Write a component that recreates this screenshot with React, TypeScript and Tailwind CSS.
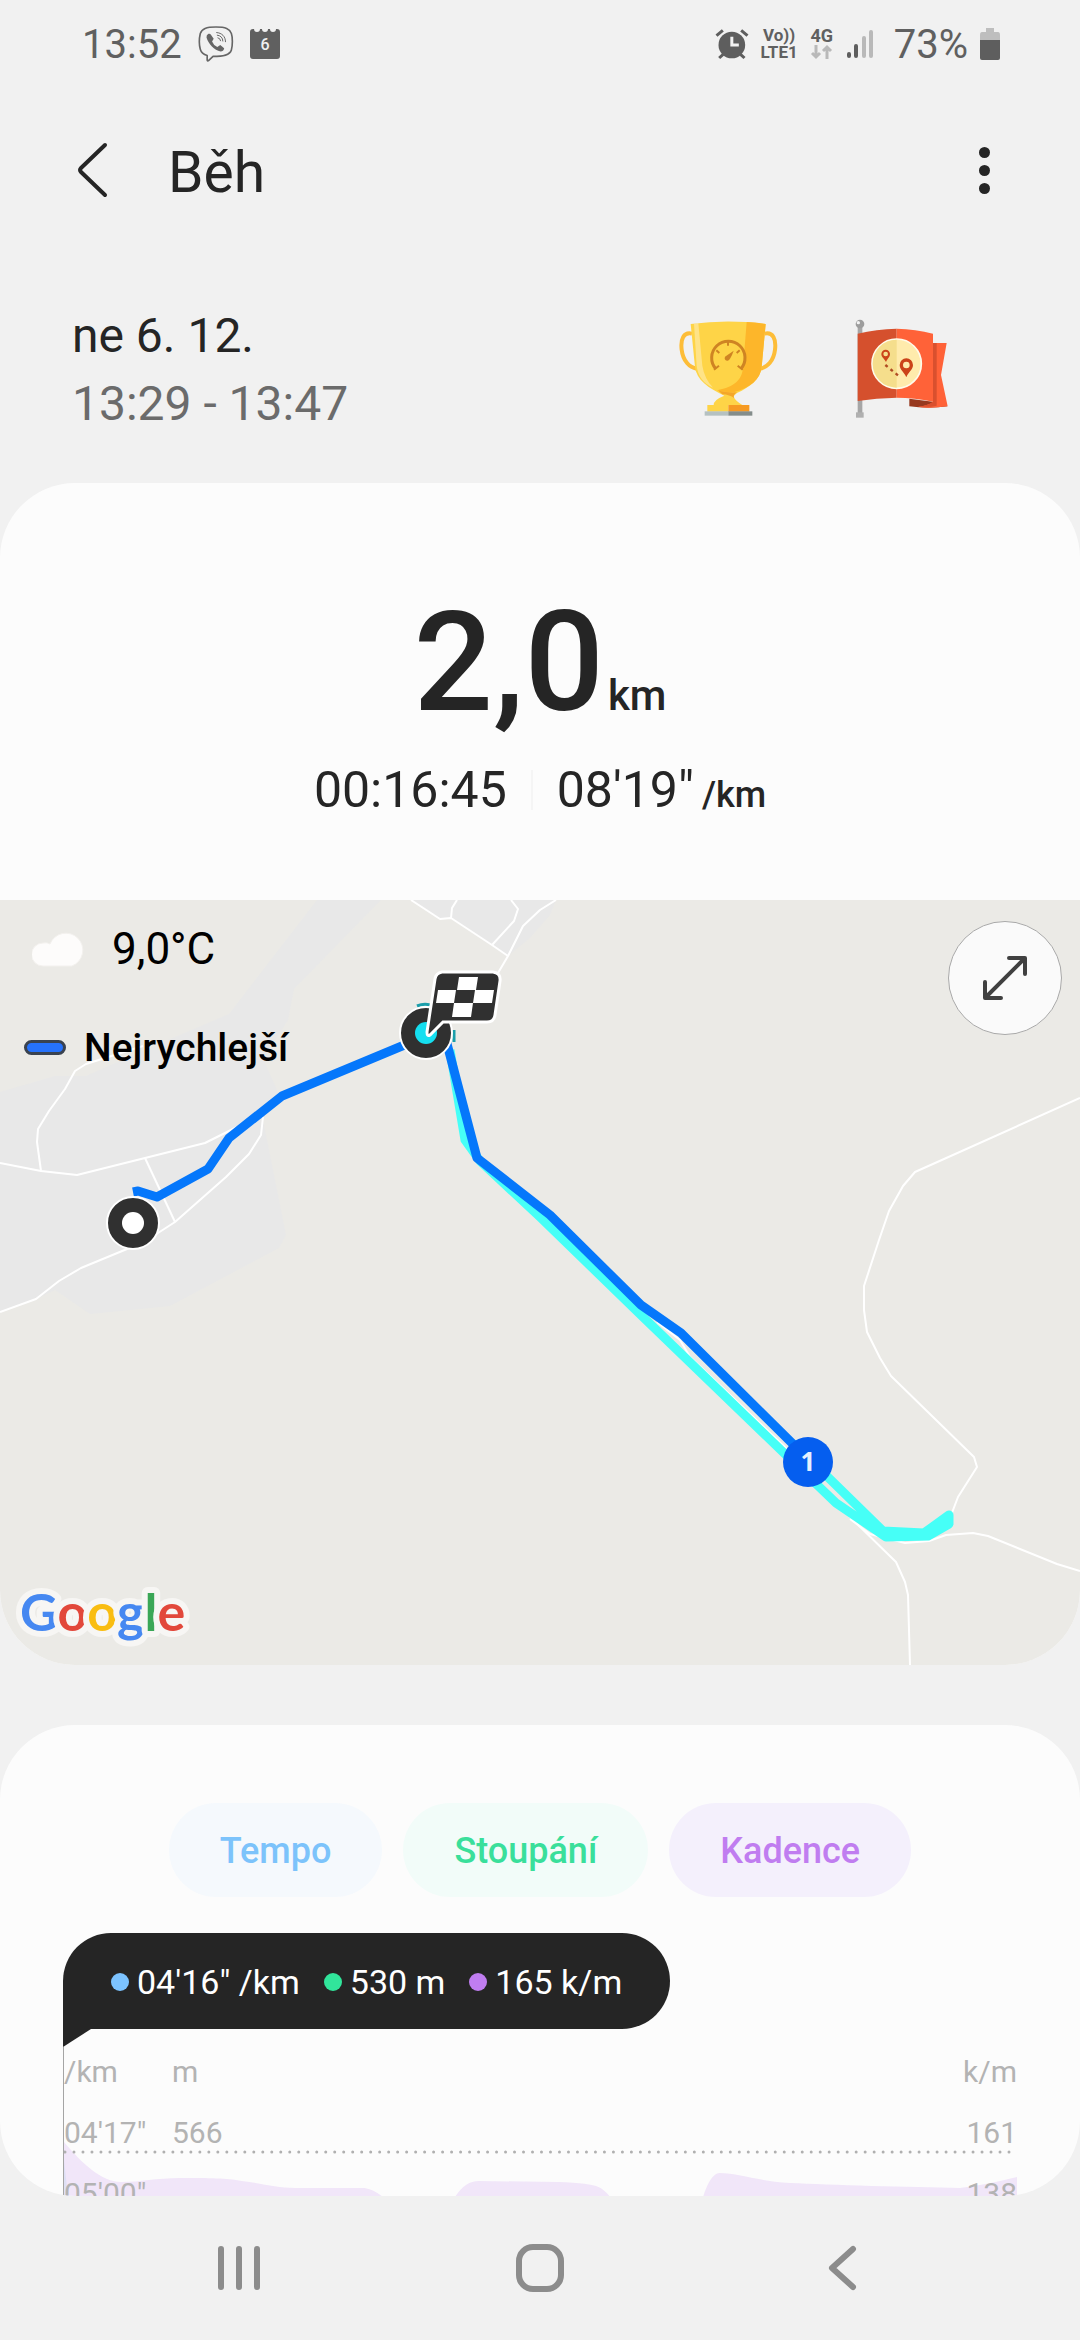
import type { ReactNode } from 'react';

const roads = [
  'M0 263L41 271L77 275L145 258L205 243L237 227',
  'M41 271L37 242L38 229L49 211L65 189L75 171L86 164L143 146',
  'M145 258L175 322',
  'M0 412L36 399L59 381L81 368L127 349L158 333L175 322L226 277L249 254L261 235L263 217',
  'M411 0L440 19L451 18L492 45L508 56',
  'M457 0L452 8L451 18',
  'M511 0L518 9L514 21L492 45',
  'M556 0L540 10L523 26L508 56L498 73',
  'M1080 198L915 272L903 286L889 311L879 340L864 386V410L867 432L880 458L891 476L974 557L977 567L958 597L950 618',
  'M850 619L870 634L905 643L929 641L946 635L973 633L988 636L1057 664L1080 671',
  'M657 422L680 440L690 457L788 550L850 617L896 662L905 682L908 695L910 765',
];

const chips = [
  { label: 'Tempo', className: 'bg-[#f5f9fd] text-[#7cc3fb]' },
  { label: 'Stoupání', className: 'bg-[#f2fcf9] text-[#3adf9b]' },
  { label: 'Kadence', className: 'bg-[#f4f0fc] text-[#c07df0]' },
];

const readings = [
  { text: '04\'16" /km', dot: 'bg-[#7cc3ff]' },
  { text: '530 m', dot: 'bg-[#31e59b]' },
  { text: '165 k/m', dot: 'bg-[#c07df0]' },
];

const axisRows = [
  ['/km', 'm', 'k/m'],
  ['04\'17"', '566', '161'],
  ['05\'00"', '', '138'],
];

function ViberIcon() {
  return (
    <svg className="h-9 w-9" viewBox="413 74 108 110" fill="none" stroke="#666" strokeWidth="5" strokeLinecap="round" strokeLinejoin="round">
      <path d="M467 77C437 77 424 82 419 97C416 110 416 134 419 145C422 156 430 161 440 164V178Q441 183 445 179L458 167C490 167 509 163 514 147C518 134 518 109 514 97C509 82 496 77 467 77Z" />
      <path d="M444 98Q437 101 438 109C444 130 462 147 481 152Q490 152 492 142L480 132L471 138Q459 132 455 121L460 113L451 100Q448 96 444 98Z" fill="#666" stroke="none" />
      <path d="M469 94C485 95 496 106 496 122M471 102C481 103 488 110 488 120M473 110Q480 111 481 119" strokeWidth="3" />
    </svg>
  );
}

function CalendarIcon() {
  return (
    <svg className="h-[30px] w-[30px]" viewBox="0 0 30 30">
      <path d="M0 3Q0 0 3 0H4A3 3 0 0 0 10 0H12A3 3 0 0 0 18 0H20A3 3 0 0 0 26 0H27Q30 0 30 3V27Q30 30 27 30H3Q0 30 0 27Z" fill="#606060" />
      <text x="15" y="21" textAnchor="middle" fontSize="16" fontWeight="500" fill="#f1f1f1" fontFamily="Roboto, sans-serif">6</text>
    </svg>
  );
}

function AlarmIcon() {
  return (
    <svg className="h-8 w-[34px]" viewBox="46 81 101 96" fill="none" stroke="#5e5e5e" strokeWidth="9">
      <circle cx="96" cy="132" r="40" fill="#5e5e5e" stroke="none" />
      <path d="M50 104L69 88M143 104L124 88M58 171L70 160M134 171L122 160" />
      <path d="M96 107V132H117" stroke="#f1f1f1" />
    </svg>
  );
}

function SignalIcons() {
  return (
    <>
      <div className="flex flex-col items-center">
        <span className="text-lg leading-4 font-bold">4G</span>
        <svg className="h-4 w-6" viewBox="0 0 24 16" fill="none" stroke="#b9b9b9" strokeWidth="3">
          <path d="M6 1V13M2 9L6 13L10 9M17 15V3M13 7L17 3L21 7" />
        </svg>
      </div>
      <svg className="h-[30px] w-7" viewBox="0 0 28 30" strokeWidth="4" strokeLinecap="round">
        <path d="M3 25V27M10 17V27" stroke="#5e5e5e" />
        <path d="M18 9V27M25 3V27" stroke="#b9b9b9" />
      </svg>
    </>
  );
}

function BatteryIcon() {
  return (
    <svg className="h-8 w-5" viewBox="0 0 20 32">
      <path d="M6 0H14V4H18Q20 4 20 7V12H0V7Q0 4 2 4H6Z" fill="#bebebe" />
      <path d="M0 12H20V30Q20 32 18 32H2Q0 32 0 30Z" fill="#5e5e5e" />
    </svg>
  );
}

function StatusBar() {
  return (
    <div className="flex h-[88px] items-center justify-between pr-20 pl-[82px] text-[#606060]">
      <div className="flex items-center gap-4">
        <span className="pt-[2px] text-[40px] leading-none">13:52</span>
        <ViberIcon />
        <CalendarIcon />
      </div>
      <div className="flex items-center gap-3">
        <AlarmIcon />
        <div className="flex flex-col items-center text-[17px] leading-[17px] font-bold">
          <span>Vo))</span>
          <span>LTE1</span>
        </div>
        <SignalIcons />
        <span className="ml-2 pt-[2px] text-[40px] leading-none">73%</span>
        <BatteryIcon />
      </div>
    </div>
  );
}

function TrophyBadge() {
  return (
    <svg className="h-[100px] w-[100px]" viewBox="55 55 300 300" role="img" aria-label="Trofej za tempo">
      <path d="M97 102C72 96 62 118 66 150C70 184 90 204 111 207M315 102C340 96 350 118 346 150C342 184 322 204 301 207" fill="none" stroke="#fdbd38" strokeWidth="12" />
      <path d="M93 73Q205 58 318 73L306 202C302 238 272 262 232 280Q222 288 222 292Q228 304 248 316H162Q162 300 194 288C146 266 110 240 106 202Z" fill="#fed447" />
      <path d="M261 67Q290 68 318 73L306 202C302 240 272 264 222 278Q190 278 172 272C226 262 246 240 250 206Z" fill="#fdb62a" />
      <path d="M103 73L116 71L128 198Q134 236 160 264Q116 244 111 198Z" fill="#fff" opacity=".35" />
      <path d="M176 273Q205 280 232 278Q218 286 224 296Q210 285 188 284Z" fill="#f4a62a" />
      <path d="M168 207A50 50 0 1 1 244 207" fill="none" stroke="#cf8423" strokeWidth="9" />
      <path d="M163 210L178 198M249 210L234 198M205 122V138M170 152L179 160M240 152L231 160" fill="none" stroke="#cf8423" strokeWidth="6" />
      <path d="M222 153L196 171Q192 182 204 183Q212 181 222 153Z" fill="#cf8423" />
      <path d="M143 316H206V336H143Z" fill="#fed447" />
      <path d="M206 316H269V336H206Z" fill="#f69a22" />
      <path d="M135 335H206V348H135Z" fill="#b5c1c1" />
      <path d="M206 335H278V348H206Z" fill="#848d8b" />
    </svg>
  );
}

function FlagBadge() {
  return (
    <svg className="h-[100px] w-[100px]" viewBox="580 55 300 300" role="img" aria-label="Vlajka za trasu">
      <path d="M594 80H608V340H594Z" fill="#a6a6a6" />
      <path d="M589 338H612V354H589Z" fill="#b0b0b0" />
      <circle cx="601" cy="73" r="13" fill="#9d9d9d" />
      <circle cx="596" cy="69" r="5" fill="#f3f3f3" />
      <path d="M749 297L820 306L864 320Q805 328 749 320Z" fill="#97391f" />
      <path d="M820 130H861L844 226L864 320Q805 328 775 321Q808 317 820 306Z" fill="#ff6238" />
      <path d="M820 130H831V318Q810 323 775 321Q808 317 820 306Z" fill="#d9502e" />
      <path d="M594 102Q650 88 711 87V294Q650 295 594 304Z" fill="#d5502d" />
      <path d="M711 87Q768 88 820 102V306Q765 294 711 294Z" fill="#ff6238" />
      <circle cx="711" cy="192" r="74" fill="#ffebac" stroke="#fffbea" strokeWidth="5" />
      <path d="M711 120A72 72 0 0 0 711 264Z" fill="#f5de8c" />
      <path fillRule="evenodd" d="M679 187C675 178 665 173 665 163A13 13 0 0 1 691 163C691 173 682 178 679 187ZM678 156A7 7 0 1 0 678 170A7 7 0 1 0 678 156ZM740 233C734 218 720 210 720 196A20 20 0 0 1 760 196C760 210 745 218 740 233ZM740 186A10 10 0 1 0 740 206A10 10 0 1 0 740 186Z" fill="#cb4319" />
      <path d="M677 196L722 233" stroke="#b04c23" strokeWidth="7" strokeDasharray="9 11" />
    </svg>
  );
}

function RouteMap() {
  return (
    <svg className="block h-[765px] w-full" viewBox="0 0 1080 765" preserveAspectRatio="xMidYMid slice" fill="none">
      <path d="M0 0H1080V765H0Z" fill="#ebeae6" />
      <path d="M0 192L55 176H86L145 150L229 114L317 0H381L294 89L288 120L267 153L265 163L278 192L263 220L286 335L279 348L170 406L90 414L55 390L36 399L0 412Z" fill="#e8e8e8" />
      <path d="M411 0L440 19L451 18L508 56L530 38L550 15L556 0Z" fill="#e8e8e8" />
      <g stroke="#fff" strokeWidth="2" strokeLinejoin="round">
        {roads.map((d) => (
          <path key={d} d={d} />
        ))}
      </g>
      <path d="M450 150L465 240L480 261L540 317L643 417L784 553L836 603L886 637L928 636L949 624V615L924 633L883 631L793 543" stroke="#46fff7" strokeWidth="9" strokeLinejoin="round" />
      <path d="M133 292L138 291L157 297L208 269L229 238L282 196L426 136M446 140L477 258L550 315L641 405L681 433L800 551" stroke="#0577fb" strokeWidth="9" strokeLinejoin="round" />
      <path d="M417 106Q424 103 430 105M454 130V142" stroke="#1a9eaa" strokeWidth="3" />
      <g stroke="#fff" strokeWidth="2">
        <circle cx="133" cy="323" r="26" fill="#303030" />
        <circle cx="426" cy="133" r="26" fill="#303030" />
      </g>
      <circle cx="133" cy="323" r="11" fill="#fff" />
      <circle cx="426" cy="133" r="11" fill="#15dff0" />
      <path d="M442 72H493Q501 73 500 81L495 115Q494 122 487 122H443L430 135Q427 137 427 132L435 79Q436 73 442 72Z" fill="#303030" stroke="#fff" strokeWidth="3" />
      <path d="M459 77H478L476 90H457ZM438 90H456L454 103H436ZM475 90H494L492 103H473ZM454 103H473L471 117H452Z" fill="#fff" />
      <circle cx="808" cy="562" r="25" fill="#055eef" />
      <text x="808" y="571" textAnchor="middle" fontSize="26" fontWeight="700" fill="#e6f0ff" fontFamily="'Open Sans', sans-serif">1</text>
    </svg>
  );
}

function GoogleLogo() {
  return (
    <svg className="h-20 w-[192px]" viewBox="0 0 192 80" role="img" aria-label="Google">
      <text x="4" y="54" fontFamily="Lato, sans-serif" fontSize="52" fontWeight="700" stroke="#f7f6f4" strokeWidth="12" strokeLinejoin="round" paintOrder="stroke">
        <tspan fill="#4688f1">G</tspan>
        <tspan fill="#e2483b">o</tspan>
        <tspan fill="#f9bd11">o</tspan>
        <tspan fill="#4688f1">g</tspan>
        <tspan fill="#3ba757">l</tspan>
        <tspan fill="#e2483b">e</tspan>
      </text>
    </svg>
  );
}

function MapPanel() {
  return (
    <div className="relative">
      <RouteMap />
      <div className="absolute inset-0 flex justify-between pt-[21px] pr-[18px] text-black">
        <div className="flex flex-col">
          <div className="flex h-14 items-center gap-7 pl-8">
            <svg className="h-9 w-[52px]" viewBox="0 0 52 36">
              <path d="M11 35A11 11 0 0 1 11 12Q15 11 18 13A17 17 0 1 1 40 35Z" fill="#fdfcfb" stroke="#f3f1ee" />
            </svg>
            <span className="text-[44px] leading-none">9,0°C</span>
          </div>
          <div className="mt-[46px] flex h-12 items-center gap-[18px] pl-6">
            <span className="h-[15px] w-[42px] rounded-full border-[3px] border-[#3a4350] bg-[#2672fb]" />
            <span className="pt-[2px] text-[39px] leading-none font-medium">Nejrychlejší</span>
          </div>
          <div className="mt-auto mb-2 pl-4">
            <GoogleLogo />
          </div>
        </div>
        <button type="button" aria-label="Zvětšit mapu" className="flex h-[114px] w-[114px] items-center justify-center rounded-full border border-[#a9a9a9] bg-[#fafafa]">
          <svg className="h-11 w-11" viewBox="0 0 44 44" fill="none" stroke="#404040" strokeWidth="4" strokeLinecap="round" strokeLinejoin="round">
            <path d="M26 2H42V18M2 26V42H18M3 41L41 3" />
          </svg>
        </button>
      </div>
    </div>
  );
}

function Chart() {
  return (
    <div className="relative min-h-0 flex-1 border-l border-[#a5a5a5]">
      <svg className="absolute inset-x-0 top-0 h-[200px] w-full" viewBox="63 2047 954 200" preserveAspectRatio="none">
        <path
          d="M63 2142C80 2162 100 2182 120 2182C140 2182 155 2178 179 2178C210 2178 225 2178 241 2181C265 2184 275 2188 295 2188H364Q372 2189 381 2196V2247H63ZM455 2196Q465 2181 478 2181L558 2182Q590 2183 598 2187Q603 2189 609 2196V2247H455ZM703 2196Q710 2174 719 2173C740 2173 755 2181 790 2183C830 2185 910 2187 960 2188Q985 2185 1017 2177V2247H703Z"
          fill="#f1e6f9"
        />
        <path d="M63 2160L67 2196V2247H63Z" fill="#dfe0f5" />
        <path d="M64 2152H1012" stroke="#b0b0b0" strokeWidth="3" strokeLinecap="round" strokeDasharray="0 9" />
      </svg>
      <table className="relative w-full text-left text-[30px] leading-[30px] text-[#b3b3b3]">
        <tbody>
          {axisRows.map(([pace, height, cadence]) => (
            <tr key={pace} className="h-[61px] align-bottom">
              <td className="w-[108px] p-0 pb-[21px]">{pace}</td>
              <td className="p-0 pb-[21px]">{height}</td>
              <td className="p-0 pb-[21px] text-right">{cadence}</td>
            </tr>
          ))}
        </tbody>
      </table>
    </div>
  );
}

function NavButton({ label, children }: { label: string; children: ReactNode }) {
  return (
    <button type="button" aria-label={label} className="flex items-center justify-center">
      <svg className="h-12 w-12" viewBox="0 0 48 48" fill="none" stroke="#8c8c8c" strokeWidth="6" strokeLinecap="round" strokeLinejoin="round">
        {children}
      </svg>
    </button>
  );
}

export default function App() {
  return (
    <div className="flex h-screen flex-col bg-[#f1f1f1] font-[Roboto,sans-serif] text-[#252525]">
      <StatusBar />

      <header className="flex h-[164px] shrink-0 items-center pr-[78px] pl-[76px]">
        <button type="button" aria-label="Zpět">
          <svg className="h-14 w-8" viewBox="0 0 32 56" fill="none" stroke="#252525" strokeWidth="4" strokeLinecap="round" strokeLinejoin="round">
            <path d="M29 3L5 26Q3 28 5 30L29 53" />
          </svg>
        </button>
        <h1 className="ml-[60px] flex-1 pt-1 text-[57px] leading-none">Běh</h1>
        <button type="button" aria-label="Další možnosti" className="flex w-9 flex-col items-center gap-[7px]">
          <span className="h-[11px] w-[11px] rounded-full bg-[#252525]" />
          <span className="h-[11px] w-[11px] rounded-full bg-[#252525]" />
          <span className="h-[11px] w-[11px] rounded-full bg-[#252525]" />
        </button>
      </header>

      <section className="flex h-[231px] shrink-0 items-center justify-between pr-[127px] pl-[72px]">
        <div className="pt-1 text-[48px] leading-[68px]">
          <p>ne 6. 12.</p>
          <p className="text-[#6b6b6b]">13:29 - 13:47</p>
        </div>
        <div className="flex gap-[75px]">
          <TrophyBadge />
          <FlagBadge />
        </div>
      </section>

      <section className="shrink-0 overflow-hidden rounded-[75px] bg-[#fcfcfc]">
        <div className="flex flex-col items-center pt-[109px] pb-[82px]">
          <p className="flex items-baseline gap-1 font-medium">
            <span className="text-[140px] leading-[140px]">2,0</span>
            <span className="text-[42px]">km</span>
          </p>
          <div className="mt-[30px] flex items-center gap-6 text-[50px] leading-[56px]">
            <span>00:16:45</span>
            <span className="h-10 w-[2px] bg-[#f5f5f5]" />
            <p className="flex items-baseline gap-2">
              <span>08'19"</span>
              <span className="text-4xl font-medium">/km</span>
            </p>
          </div>
        </div>
        <MapPanel />
      </section>

      <section className="mt-[60px] flex min-h-0 flex-1 flex-col overflow-hidden rounded-[75px] bg-[#fcfcfc] px-[63px] pt-[78px]">
        <div className="flex shrink-0 justify-center gap-[21px]">
          {chips.map(({ label, className }) => (
            <button key={label} type="button" className={`h-[94px] rounded-full px-[51px] pt-[2px] text-[36px] font-medium ${className}`}>
              {label}
            </button>
          ))}
        </div>
        <div className="mt-9 shrink-0 self-start">
          <div className="flex h-24 items-center gap-6 rounded-t-[48px] rounded-br-[48px] bg-[#252525] px-12 pt-[2px] text-[34px] text-white">
            {readings.map(({ text, dot }) => (
              <span key={text} className="flex items-center gap-2">
                <span className={`h-[18px] w-[18px] rounded-full ${dot}`} />
                {text}
              </span>
            ))}
          </div>
          <svg className="block h-[18px] w-7" viewBox="0 0 28 18">
            <path d="M0 0H28L0 18Z" fill="#252525" />
          </svg>
        </div>
        <Chart />
      </section>

      <nav className="grid h-36 shrink-0 grid-cols-3 px-[88px]">
        <NavButton label="Poslední aplikace">
          <path d="M6 5V43M24 5V43M42 5V43" />
        </NavButton>
        <NavButton label="Domů">
          <rect x="3" y="3" width="42" height="42" rx="14" />
        </NavButton>
        <NavButton label="Zpět na předchozí">
          <path d="M36 5L15 24L36 43" />
        </NavButton>
      </nav>
    </div>
  );
}
